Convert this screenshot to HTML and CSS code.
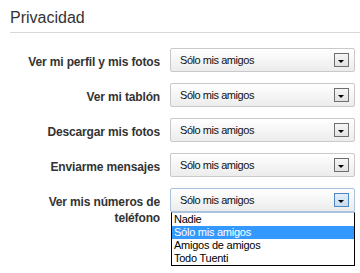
FILE: index.html
```html
<!DOCTYPE html>
<html lang="es">
<head>
  <meta charset="UTF-8">
  <title>Privacidad</title>
  <link rel="stylesheet" href="styles.css">
</head>
<body>
  <h2 class="section-title">Privacidad</h2>

  <div class="settings">
    <div class="row">
      <label class="row-label">Ver mi perfil y mis fotos</label>
      <div class="select">
        <span class="select-value">Sólo mis amigos</span>
        <span class="select-arrow"></span>
      </div>
    </div>

    <div class="row">
      <label class="row-label">Ver mi tablón</label>
      <div class="select">
        <span class="select-value">Sólo mis amigos</span>
        <span class="select-arrow"></span>
      </div>
    </div>

    <div class="row">
      <label class="row-label">Descargar mis fotos</label>
      <div class="select">
        <span class="select-value">Sólo mis amigos</span>
        <span class="select-arrow"></span>
      </div>
    </div>

    <div class="row">
      <label class="row-label">Enviarme mensajes</label>
      <div class="select">
        <span class="select-value">Sólo mis amigos</span>
        <span class="select-arrow"></span>
      </div>
    </div>

    <div class="row">
      <label class="row-label">Ver mis números de teléfono</label>
      <div class="select select-open">
        <span class="select-value">Sólo mis amigos</span>
        <span class="select-arrow"></span>
        <ul class="select-list">
          <li>Nadie</li>
          <li class="selected">Sólo mis amigos</li>
          <li>Amigos de amigos</li>
          <li>Todo Tuenti</li>
        </ul>
      </div>
    </div>
  </div>
</body>
</html>
```

FILE: styles.css
```css
* {
  margin: 0;
  padding: 0;
  box-sizing: border-box;
}

body {
  font-family: 'Liberation Sans', Arial, sans-serif;
  background-color: #fff;
  color: #333;
  width: 360px;
  height: 273px;
  overflow: hidden;
}

.section-title {
  margin: 8px 0 0 10px;
  padding-bottom: 4px;
  font-size: 16px;
  line-height: 20px;
  font-weight: normal;
  color: #333;
  border-bottom: 1px solid #d8d8d8;
}

.settings {
  margin-top: 15px;
  padding-left: 10px;
  display: flex;
  flex-direction: column;
  gap: 11px;
}

.row {
  display: flex;
  align-items: flex-start;
}

.row-label {
  width: 160px;
  padding: 6px 10px 0 0;
  text-align: right;
  font-size: 12px;
  line-height: 16px;
  font-weight: bold;
  letter-spacing: -0.15px;
  color: #333;
}

.select {
  position: relative;
  width: 185px;
  height: 24px;
  border: 1px solid #c9c9c9;
  border-radius: 2px;
  background: linear-gradient(#ffffff, #ececec);
  display: flex;
  align-items: center;
  justify-content: space-between;
  padding: 0 5px 0 9px;
}

.select-value {
  font-size: 11px;
  letter-spacing: -0.45px;
  color: #111;
}

.select-arrow {
  position: relative;
  width: 15px;
  height: 14px;
  border: 1px solid #6e6e6e;
  background: linear-gradient(#f6f6f6, #e2e2e2);
}

.select-arrow::after {
  content: '';
  position: absolute;
  left: 3px;
  bottom: 3px;
  border-left: 3.5px solid transparent;
  border-right: 3.5px solid transparent;
  border-top: 3px solid #000;
}

.select-open {
  border-color: #a9c3de;
}

.select-open .select-arrow {
  border-color: #4f86bd;
  background: linear-gradient(#e4f0fb, #c6dcf1);
}

.select-list {
  position: absolute;
  top: 23px;
  left: 0;
  width: 184px;
  list-style: none;
  background: #fff;
  border: 1px solid #000;
  border-top-color: #a9c3de;
}

.select-list li {
  height: 13px;
  line-height: 13px;
  padding-left: 2px;
  font-size: 11px;
  letter-spacing: -0.25px;
  color: #000;
}

.select-list li.selected {
  background-color: #3399ff;
  color: #fff;
}
```
